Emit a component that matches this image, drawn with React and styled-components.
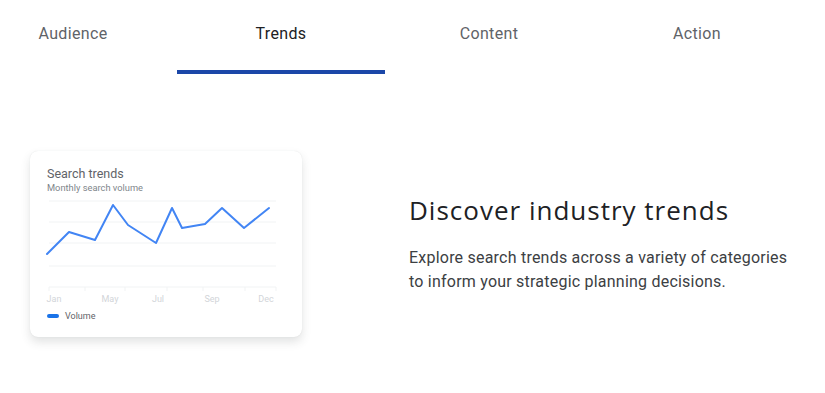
import React from 'react';
import styled, { createGlobalStyle } from 'styled-components';

const GlobalStyle = createGlobalStyle`
  body {
    margin: 0;
    background: #fff;
    font-family: Roboto, "Liberation Sans", sans-serif;
  }
`;

const Page = styled.div`
  width: 825px;
  height: 393px;
  overflow: hidden;
`;

const TabBar = styled.nav`
  display: flex;
  margin-left: -31px;
  height: 74px;
`;

const Tab = styled.div`
  width: 208px;
  box-sizing: border-box;
  padding-top: 24px;
  text-align: center;
  font-size: 16px;
  line-height: 20px;
  letter-spacing: 0.35px;
  color: ${(p) => (p.$active ? '#202124' : '#5f6368')};
  border-bottom: 4px solid ${(p) => (p.$active ? '#1b47a8' : 'transparent')};
`;

const Feature = styled.section`
  display: flex;
  align-items: center;
  padding: 77px 0 0 30px;
`;

const Card = styled.div`
  width: 272px;
  height: 186px;
  box-sizing: border-box;
  padding: 15px 17px 0 17px;
  border-radius: 8px;
  background: #fff;
  box-shadow: 0 0 1px rgba(60, 64, 67, 0.15), 0 5px 10px rgba(60, 64, 67, 0.15);
`;

const CardTitle = styled.div`
  font-size: 12.5px;
  line-height: 16px;
  color: #5f6368;
`;

const CardSub = styled.div`
  font-size: 9.3px;
  line-height: 12px;
  color: #80868b;
`;

const Chart = styled.svg`
  display: block;
  margin: 1px 0 0 -2px;
`;

const Legend = styled.div`
  display: flex;
  align-items: center;
  gap: 6px;
  margin-top: 6px;
  font-size: 9px;
  color: #5f6368;
`;

const Swatch = styled.span`
  width: 12px;
  height: 4px;
  border-radius: 2px;
  background: #1a73e8;
`;

const Copy = styled.div`
  margin-left: 107px;
  width: 410px;
`;

const Heading = styled.h2`
  margin: 0;
  font-family: "Open Sans", Roboto, sans-serif;
  font-size: 26px;
  line-height: 32px;
  font-weight: 400;
  letter-spacing: 1px;
  color: #202124;
`;

const Body = styled.p`
  margin: 20px 0 0;
  font-size: 16px;
  line-height: 24.5px;
  letter-spacing: 0.22px;
  color: #3c4043;
`;

const tabs = ['Audience', 'Trends', 'Content', 'Action'];

const points = [
  [2, 59], [24, 37], [50, 45], [68, 10], [83, 30], [111, 48],
  [127, 13], [137, 33], [160, 29], [177, 13], [199, 33], [224, 13],
];

const gridY = [6, 27, 48, 71, 92];
const ticks = [4, 40, 80, 122, 158, 200, 231];
const labels = [
  { t: 'Jan', x: 9 },
  { t: 'May', x: 65 },
  { t: 'Jul', x: 113 },
  { t: 'Sep', x: 167 },
  { t: 'Dec', x: 221 },
];

function TrendChart() {
  return (
    <Chart width="235" height="110" viewBox="0 0 235 110">
      {gridY.map((y) => (
        <line key={y} x1="4" x2="231" y1={y} y2={y} stroke="#f1f3f4" strokeWidth="1" />
      ))}
      {ticks.map((x) => (
        <line key={x} x1={x} x2={x} y1="92" y2="96" stroke="#f1f3f4" strokeWidth="1" />
      ))}
      <polyline
        points={points.map((p) => p.join(',')).join(' ')}
        fill="none"
        stroke="#4285f4"
        strokeWidth="2"
        strokeLinejoin="round"
        strokeLinecap="round"
      />
      {labels.map((l) => (
        <text
          key={l.t}
          x={l.x}
          y="107"
          textAnchor="middle"
          fontSize="9"
          fill="#d2d5d9"
          fontFamily="Roboto, sans-serif"
        >
          {l.t}
        </text>
      ))}
    </Chart>
  );
}

export default function App() {
  return (
    <Page>
      <GlobalStyle />
      <TabBar>
        {tabs.map((t) => (
          <Tab key={t} $active={t === 'Trends'}>
            {t}
          </Tab>
        ))}
      </TabBar>
      <Feature>
        <Card>
          <CardTitle>Search trends</CardTitle>
          <CardSub>Monthly search volume</CardSub>
          <TrendChart />
          <Legend>
            <Swatch />
            Volume
          </Legend>
        </Card>
        <Copy>
          <Heading>Discover industry trends</Heading>
          <Body>
            Explore search trends across a variety of categories
            <br />
            to inform your strategic planning decisions.
          </Body>
        </Copy>
      </Feature>
    </Page>
  );
}
